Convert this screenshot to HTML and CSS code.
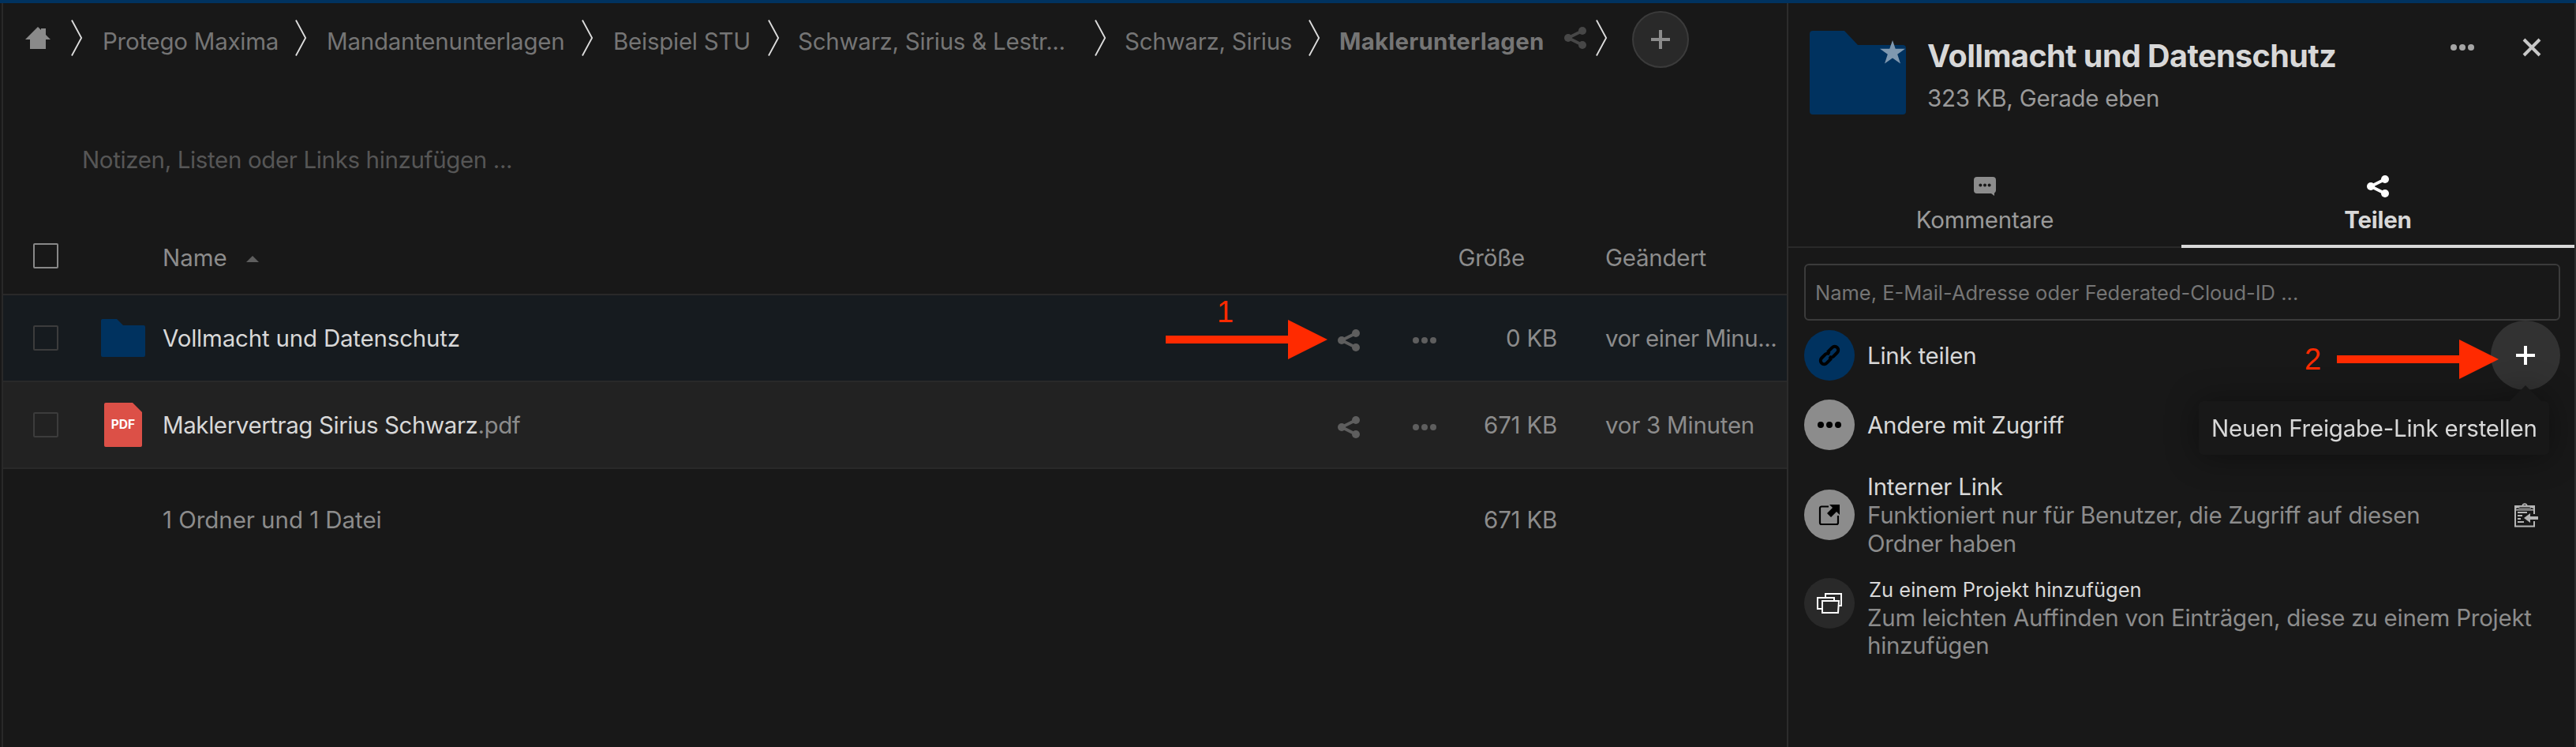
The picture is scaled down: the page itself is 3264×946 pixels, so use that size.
FILE: index.html
```html
<!DOCTYPE html>
<html lang="de">
<head>
    <meta charset="UTF-8">
    <title>Maklerunterlagen</title>
    <link rel="stylesheet" href="styles.css">
</head>
<body>
    <svg class="sprite">
        <symbol id="share" viewBox="0 0 28 28">
            <path d="M23 5L5 14l18 9" fill="none" stroke="currentColor" stroke-width="3.800"/>
            <circle cx="23" cy="5" r="5"/>
            <circle cx="5" cy="14" r="5"/>
            <circle cx="23" cy="23" r="5"/>
        </symbol>
        <symbol id="more" viewBox="0 0 30 10">
            <circle cx="4" cy="5" r="4"/>
            <circle cx="15" cy="5" r="4"/>
            <circle cx="26" cy="5" r="4"/>
        </symbol>
        <symbol id="plus" viewBox="0 0 24 24">
            <path d="M10 0h4v10h10v4H14v10h-4V14H0v-4h10z"/>
        </symbol>
        <symbol id="sep" viewBox="0 0 16 48">
            <path d="M1 0l13 24L1 48" fill="none" stroke="currentColor" stroke-width="2"/>
        </symbol>
    </svg>

    <div class="topbar"></div>
    <div class="app">
        <main class="files">
            <nav class="crumbs">
                <svg class="home" viewBox="0 0 32 28"><path d="M16 0L0 16h6v12h20V16h6l-6-6V2h-6v2z"/></svg>
                <svg class="sep"><use href="#sep"/></svg>
                <a class="c1">Protego Maxima</a>
                <svg class="sep"><use href="#sep"/></svg>
                <a class="c2">Mandantenunterlagen</a>
                <svg class="sep"><use href="#sep"/></svg>
                <a class="c3">Beispiel STU</a>
                <svg class="sep"><use href="#sep"/></svg>
                <a class="c4">Schwarz, Sirius &amp; Lestr...</a>
                <svg class="sep"><use href="#sep"/></svg>
                <a class="c5">Schwarz, Sirius</a>
                <svg class="sep"><use href="#sep"/></svg>
                <a class="c6">Maklerunterlagen</a>
                <svg class="share dim"><use href="#share"/></svg>
                <svg class="sep last"><use href="#sep"/></svg>
                <button class="add"><svg class="plus"><use href="#plus"/></svg></button>
            </nav>

            <p class="notes">Notizen, Listen oder Links hinzufügen ...</p>

            <div class="row head">
                <span class="check"></span>
                <span class="icon"></span>
                <span class="name">Name <i class="sort"></i></span>
                <span class="size">Größe</span>
                <span class="date">Geändert</span>
            </div>
            <div class="row active">
                <span class="check"></span>
                <span class="icon"><svg class="folder" viewBox="0 0 56 48"><path d="M2 0h18l8 8h26a2 2 0 0 1 2 2v36a2 2 0 0 1-2 2H2a2 2 0 0 1-2-2V2a2 2 0 0 1 2-2z"/></svg></span>
                <span class="name">Vollmacht und Datenschutz</span>
                <svg class="share"><use href="#share"/></svg>
                <svg class="more"><use href="#more"/></svg>
                <span class="size">0 KB</span>
                <span class="date">vor einer Minu...</span>
            </div>
            <div class="row second">
                <span class="check"></span>
                <span class="icon pdf"><svg viewBox="0 0 48 56"><path d="M2 0h34l12 12v42a2 2 0 0 1-2 2H2a2 2 0 0 1-2-2V2a2 2 0 0 1 2-2z"/></svg><b>PDF</b></span>
                <span class="name">Maklervertrag Sirius Schwarz<em>.pdf</em></span>
                <svg class="share"><use href="#share"/></svg>
                <svg class="more"><use href="#more"/></svg>
                <span class="size">671 KB</span>
                <span class="date">vor 3 Minuten</span>
            </div>
            <div class="row summary">
                <span class="check"></span>
                <span class="icon"></span>
                <span class="name">1 Ordner und 1 Datei</span>
                <span class="size">671 KB</span>
                <span class="date"></span>
            </div>
        </main>

        <aside class="sidebar">
            <header class="info">
                <div class="preview">
                    <svg class="folder" viewBox="0 0 122 106"><path d="M4 0h40l17 18h57a4 4 0 0 1 4 4v80a4 4 0 0 1-4 4H4a4 4 0 0 1-4-4V4a4 4 0 0 1 4-4z"/></svg>
                    <svg class="star" viewBox="0 0 32 30"><path d="M16 0l3.700 10.800H32l-9.800 7L26 29.500l-10-7-10 7 3.800-11.700L0 10.800h12.300z"/></svg>
                </div>
                <div class="title">
                    <h2>Vollmacht und Datenschutz</h2>
                    <p>323 KB, Gerade eben</p>
                </div>
                <svg class="more"><use href="#more"/></svg>
                <svg class="close" viewBox="0 0 24 24"><path d="M2 2l20 20M22 2L2 22"/></svg>
            </header>

            <div class="tabs">
                <div class="tab">
                    <svg class="comment" viewBox="0 0 28 24"><path d="M4 0h20a4 4 0 0 1 4 4v13a4 4 0 0 1-2 3.500V24l-4-3H4a4 4 0 0 1-4-4V4a4 4 0 0 1 4-4z"/><g fill="#181818"><circle cx="8.400" cy="10.400" r="2"/><circle cx="14" cy="10.400" r="2"/><circle cx="19.600" cy="10.400" r="2"/></g></svg>
                    <span>Kommentare</span>
                </div>
                <div class="tab selected">
                    <svg class="share"><use href="#share"/></svg>
                    <span>Teilen</span>
                </div>
            </div>

            <div class="search">Name, E-Mail-Adresse oder Federated-Cloud-ID ...</div>

            <div class="entry link">
                <span class="avatar blue"><svg viewBox="0 0 28 28"><g fill="none" stroke="#000" stroke-width="4" transform="rotate(-45 14 14)"><path d="M15 9.500h8.500a4.500 4.500 0 0 1 0 9h-7a4.500 4.500 0 0 1-4-3.500"/><path d="M13 18.500H4.500a4.500 4.500 0 0 1 0-9h7a4.500 4.500 0 0 1 4 3.500"/></g></svg></span>
                <span class="text">Link teilen</span>
                <span class="new-link">
                    <svg class="plus"><use href="#plus"/></svg>
                    <span class="tooltip">Neuen Freigabe-Link erstellen</span>
                </span>
            </div>
            <div class="entry others">
                <span class="avatar"><svg class="dots"><use href="#more"/></svg></span>
                <span class="text">Andere mit Zugriff</span>
            </div>
            <div class="entry internal">
                <span class="avatar"><svg viewBox="0 0 28 28"><path d="M13 3.500H4a2 2 0 0 0-2 2V24a2 2 0 0 0 2 2h19a2 2 0 0 0 2-2v-9" fill="none" stroke="#000" stroke-width="2.200"/><path d="M14 1h13v13l-4-4-7 7-5-5 7-7z"/></svg></span>
                <div class="text">
                    <span>Interner Link</span>
                    <p>Funktioniert nur für Benutzer, die Zugriff auf diesen<br>Ordner haben</p>
                </div>
                <svg class="clipboard" viewBox="0 0 30 32"><path d="M25 15V5H1v25.500h24V24" fill="none" stroke="currentColor" stroke-width="2"/><path d="M0 4h9.500a3.600 3.600 0 0 1 7 0H26v6h-2V8l-3-1H5L2 8v2H0zM5 8h16v-1l-4-2h-2a2 2 0 0 0-4 0H9L5 7zM2 9h22v1.500H2zM4 12h12v2H4zM4 16h6v2H4zM4 20h4v2H4zM4 24h8v2H4zM12 20l8-6v4h10v4H20v4z"/></svg>
            </div>
            <div class="entry project">
                <span class="avatar dark"><svg class="projects" viewBox="0 0 32 26"><g fill="none" stroke="#fff" stroke-width="2"><path d="M11 5V1h20v15h-3"/><path d="M6 20H1V6h21v4"/><path d="M7 10h21l-1 15H7z"/></g></svg></span>
                <div class="text">
                    <span class="small">Zu einem Projekt hinzufügen</span>
                    <p>Zum leichten Auffinden von Einträgen, diese zu einem Projekt<br>hinzufügen</p>
                </div>
            </div>
        </aside>
    </div>

    <!-- step markers -->
    <div class="step one"><span>1</span><svg viewBox="0 0 205 50"><path d="M0 20h155V0l50 25-50 25V30H0z"/></svg></div>
    <div class="step two"><span>2</span><svg viewBox="0 0 205 50"><path d="M0 20h155V0l50 25-50 25V30H0z"/></svg></div>
</body>
</html>
```

FILE: styles.css
```css
* {
    margin: 0;
    padding: 0;
    box-sizing: border-box;
}

body {
    position: relative;
    width: 3264px;
    height: 946px;
    overflow: hidden;
    background: #181818;
    color: #8c8c8c;
    font-family: Inter, "Liberation Sans", sans-serif;
    font-size: 29.5px;
    line-height: 36px;
    letter-spacing: -.25px;
    white-space: nowrap;
}

svg {
    display: block;
    flex: none;
    fill: currentColor;
}

.sprite {
    display: none;
}

.topbar {
    height: 4px;
    background: #00325f;
}

.app {
    display: flex;
    height: 942px;
}

.files {
    width: 2264px;
    margin-left: 2px;
    border-left: 2px solid #292929;
}

/* breadcrumbs */
.crumbs {
    display: flex;
    align-items: center;
    height: 88px;
    padding-left: 28px;
    color: #757575;
}

.crumbs a {
    margin: 7px 24px 0 25px;
}

.crumbs .c1 { width: 220px; }
.crumbs .c2 { width: 299px; }
.crumbs .c3 { width: 172px; }
.crumbs .c4 { width: 338px; margin: 7px 38px 0 23px; }
.crumbs .c5 { width: 209px; margin-left: 23px; }
.crumbs .c6 { width: 261px; margin-left: 24px; font-weight: 700; letter-spacing: .2px; }

.home {
    width: 32px;
    height: 28px;
    margin-right: 26px;
    color: #8a8a8a;
}

.sep {
    width: 15px;
    height: 48px;
    color: #dcdcdc;
}

.share {
    width: 28px;
    height: 28px;
    color: #5e5e5e;
}

.share.dim {
    color: #474747;
}

.sep.last {
    margin: 0 31px 0 12px;
}

.add {
    display: flex;
    align-items: center;
    justify-content: center;
    width: 72px;
    height: 72px;
    margin-top: 4px;
    border: 2px solid #3b3b3b;
    border-radius: 50%;
    background: #292929;
    color: #8c8c8c;
}

.plus {
    width: 24px;
    height: 24px;
}

.notes {
    height: 188px;
    padding: 92px 0 0 100px;
    color: #565656;
    letter-spacing: -.36px;
}

/* file table */
.row {
    display: flex;
    align-items: center;
    height: 110px;
    padding-left: 38px;
    border-bottom: 2px solid #292929;
}

.row.head {
    height: 94px;
}

.row.active {
    background: #161b1f;
}

.row.second {
    background: #222;
}

.row.summary {
    height: 128px;
    border: 0;
}

.check {
    width: 32px;
    height: 32px;
    border: 2px solid #3c3c3c;
    border-radius: 2px;
}

.head .check {
    margin-top: -4px;
    border-color: #888;
}

.summary .check {
    visibility: hidden;
}

.icon {
    display: flex;
    justify-content: center;
    width: 56px;
    margin: 0 22px 0 54px;
}

.folder {
    width: 56px;
    height: 48px;
    color: #00325f;
}

.icon.pdf {
    position: relative;
}

.pdf svg {
    width: 48px;
    height: 56px;
    color: #dc5047;
}

.pdf b {
    position: absolute;
    top: 10px;
    color: #fff;
    font-size: 15.5px;
    letter-spacing: 0;
}

.name {
    flex: 1;
}

.active .name,
.second .name {
    color: #d8d8d8;
}

.active .name {
    letter-spacing: -.2px;
}

.second .name {
    letter-spacing: -.42px;
}

.name em {
    color: #8c8c8c;
    font-style: normal;
}

.head .name,
.summary .name {
    letter-spacing: -.05px;
}

.sort {
    display: inline-block;
    margin: 0 0 5px 16px;
    border: 8px solid transparent;
    border-top: 0;
    border-bottom-color: #5e5e5e;
}

.more {
    width: 30px;
    height: 10px;
    color: #5e5e5e;
}

.row .share,
.row .more {
    margin-top: 6px;
}

.row .more {
    margin-left: 67px;
}

.size {
    width: 153px;
    text-align: right;
}

.head .size {
    padding-right: 41px;
}

.date {
    width: 232px;
    margin-left: 61px;
}

.active .date {
    letter-spacing: -.5px;
}

/* sidebar */
.sidebar {
    width: 1000px;
    margin-left: -2px;
    border: solid #2c2c2c;
    border-width: 0 2px;
}

.info {
    display: flex;
    height: 206px;
    padding: 35px 0 0 27px;
}

.preview {
    position: relative;
}

.preview .folder {
    width: 122px;
    height: 106px;
}

.star {
    position: absolute;
    top: 12px;
    right: 1px;
    width: 32px;
    height: 30px;
    color: #7f98af;
}

.title {
    width: 663px;
    margin-left: 27px;
    color: #9a9a9a;
}

.title h2 {
    padding-top: 8px;
    color: #d8d8d8;
    font-size: 39.5px;
    font-weight: 700;
    line-height: 48px;
    letter-spacing: -.55px;
}

.title p {
    margin-top: 11px;
}

.info .more {
    margin-top: 16px;
    color: #a5a5a5;
}

.close {
    width: 24px;
    height: 24px;
    margin: 9px 0 0 61px;
    fill: none;
    stroke: #c8c8c8;
    stroke-width: 4;
}

.tabs {
    display: flex;
    height: 104px;
    border-bottom: 2px solid #292929;
}

.tab {
    display: flex;
    flex-direction: column;
    align-items: center;
    width: 50%;
    height: 104px;
    padding-top: 14px;
    color: #9a9a9a;
}

.comment {
    width: 28px;
    height: 24px;
    color: #8c8c8c;
}

.tab span {
    margin-top: 12px;
}

.tab.selected {
    padding-top: 12px;
    border-bottom: 4px solid #d8d8d8;
    color: #d8d8d8;
    font-weight: 700;
}

.selected .share {
    color: #fff;
}

.selected span {
    margin-top: 10px;
}

.search {
    width: 958px;
    height: 72px;
    margin: 20px 0 0 20px;
    padding-left: 12px;
    border: 2px solid #3b3b3b;
    border-radius: 6px;
    color: #757575;
    font-size: 25.5px;
    line-height: 70px;
    letter-spacing: 0;
}

.entry {
    display: flex;
    align-items: center;
    padding-left: 20px;
}

.entry .text {
    flex: 1;
    margin-left: 16px;
    color: #d8d8d8;
}

.entry p {
    color: #8c8c8c;
}

.avatar {
    display: flex;
    align-items: center;
    justify-content: center;
    width: 64px;
    height: 64px;
    border-radius: 50%;
    background: #8c8c8c;
    color: #000;
}

.avatar svg {
    width: 28px;
    height: 28px;
}

.avatar .dots {
    width: 30px;
    height: 10px;
}

.avatar .projects {
    width: 32px;
    height: 26px;
}

.avatar.blue {
    background: #00325f;
}

.avatar.dark {
    background: #292929;
}

.link,
.others {
    height: 88px;
}

.internal {
    height: 140px;
}

.project {
    height: 120px;
    line-height: 35.5px;
}

.project .avatar {
    margin-top: -36px;
}

.new-link {
    position: relative;
    display: flex;
    align-items: center;
    justify-content: center;
    width: 88px;
    height: 88px;
    margin-right: 18px;
    border-radius: 50%;
    background: #323232;
    color: #fff;
}

.tooltip {
    position: absolute;
    top: 102px;
    right: 14px;
    width: 444px;
    height: 68px;
    padding-left: 16px;
    border-radius: 6px;
    background: #181818;
    color: #d8d8d8;
    line-height: 68px;
    filter: drop-shadow(0 2px 20px rgba(0, 0, 0, .4));
}

.tooltip::before {
    content: "";
    position: absolute;
    top: -20px;
    right: 10px;
    border: 20px solid transparent;
    border-top: 0;
    border-bottom-color: #181818;
}

.clipboard {
    width: 30px;
    height: 32px;
    margin-right: 46px;
    color: #b5b5b5;
}

.small {
    margin-left: 2px;
    font-size: 25.5px;
    letter-spacing: 0;
}

/* step markers over the page */
.step {
    position: absolute;
    color: #ff2a00;
    font-family: "Liberation Sans", sans-serif;
    font-size: 38px;
}

.step svg {
    width: 205px;
    height: 50px;
}

.one {
    top: 377px;
    left: 1477px;
}

.one span {
    display: block;
    height: 28px;
    padding-left: 65px;
}

.two {
    display: flex;
    align-items: center;
    top: 430px;
    left: 2920px;
}

.two svg {
    margin-left: 20px;
}
```
